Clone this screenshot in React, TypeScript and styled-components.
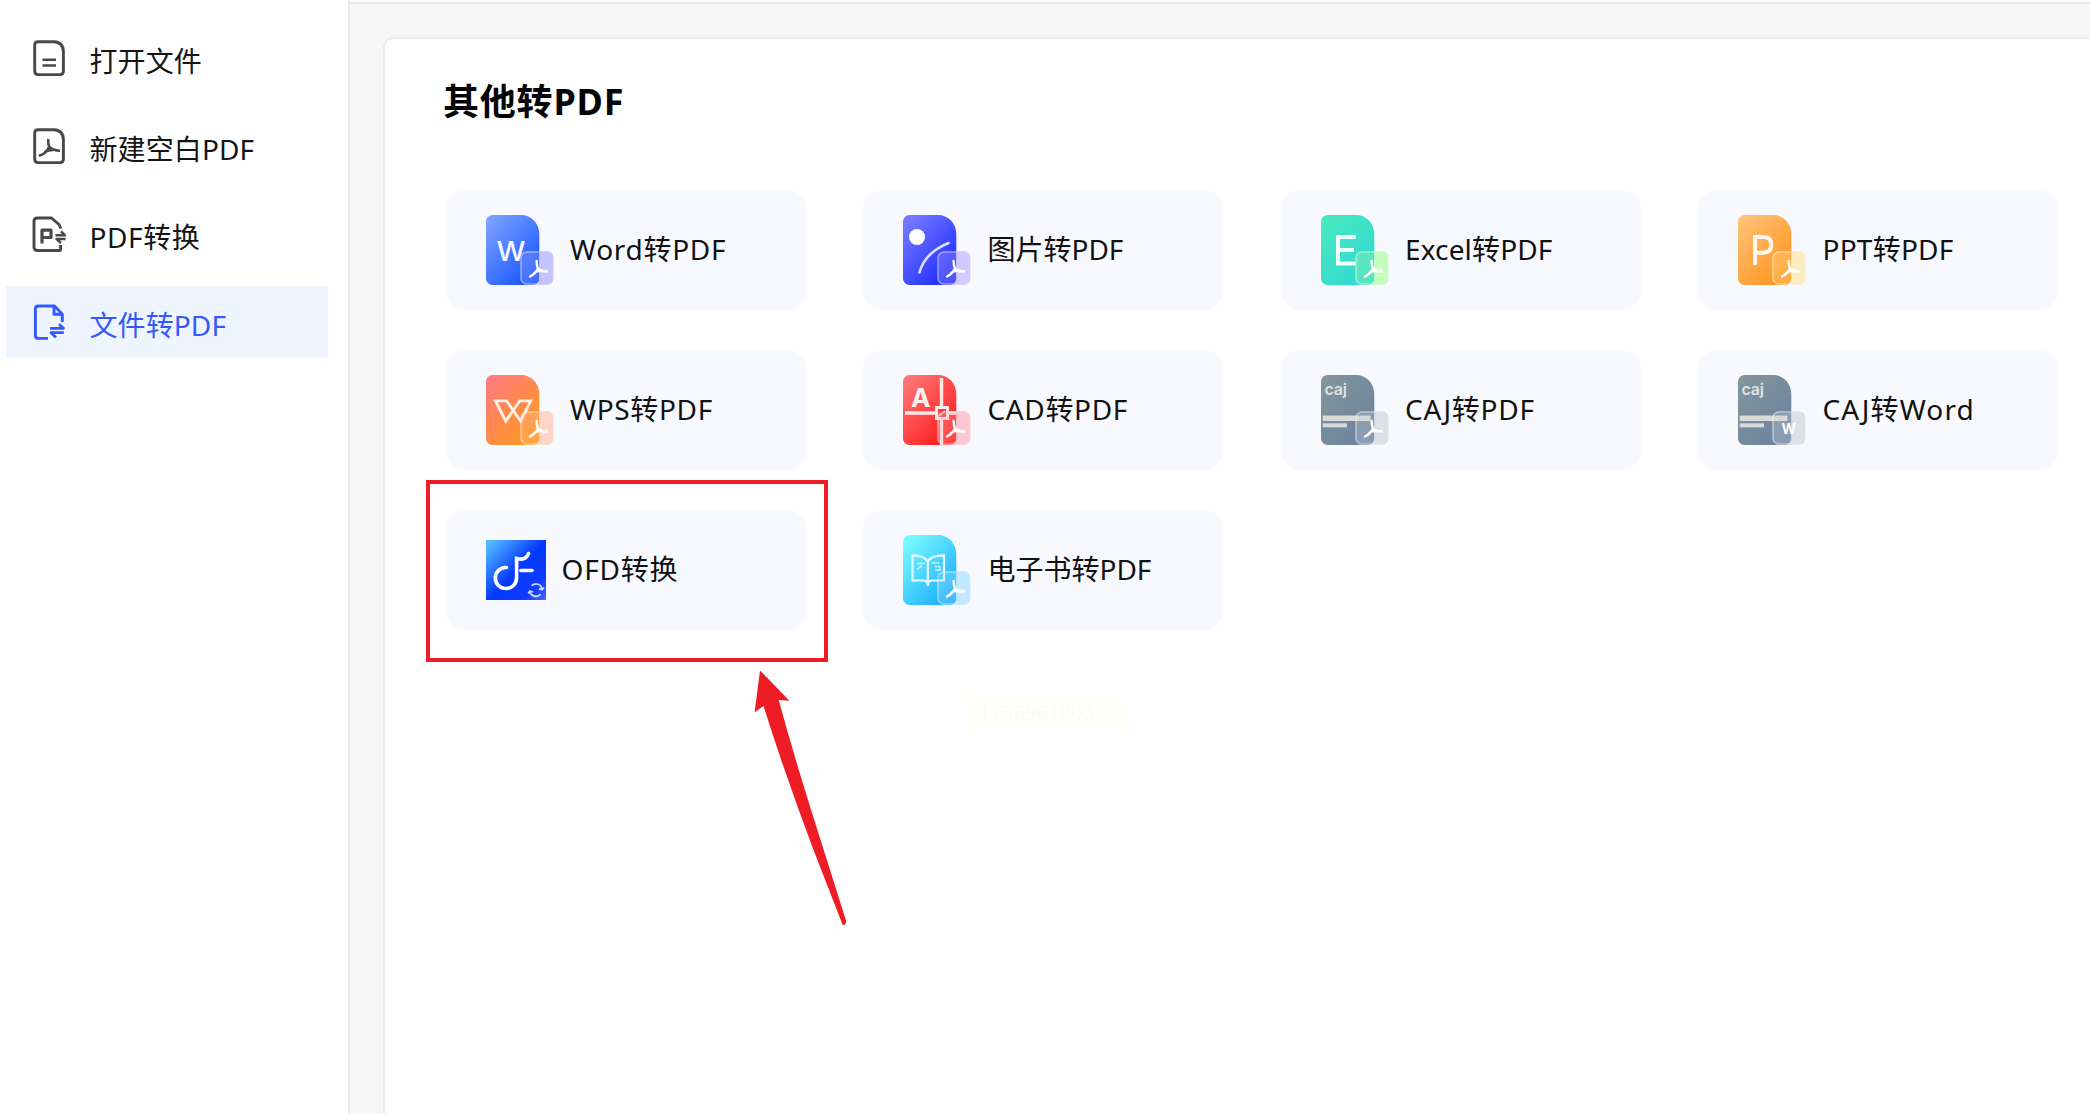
import React from "react";
import styled, { createGlobalStyle } from "styled-components";

const GlobalStyle = createGlobalStyle`
  * { box-sizing: border-box; }
  html, body { margin: 0; padding: 0; background: #fefefe; overflow: hidden; }
  body { font-family: "Noto Sans", "Noto Sans CJK SC", sans-serif; color: #111; }
  svg { display: block; flex: none; }
`;

const Page = styled.div`
  position: relative;
  display: flex;
  width: 2090px;
  height: 1114px;
  overflow: hidden;
`;

const Sidebar = styled.nav`
  width: 350px;
  flex: none;
  padding: 22px 20px 0 6px;
  border-right: 2px solid #e9e9e9;
  background: #fefefe;
  display: flex;
  flex-direction: column;
  gap: 16px;
`;

const NavItem = styled.a<{ $active?: boolean }>`
  height: 72px;
  display: flex;
  align-items: center;
  gap: 22.5px;
  padding-left: 25px;
  color: ${(p) => (p.$active ? "#3358ff" : "#141414")};
  background: ${(p) => (p.$active ? "#eef5ff" : "transparent")};
`;

const NavIcon = styled.svg<{ $active?: boolean }>`
  width: 36px;
  height: 40px;
  fill: none;
  stroke: ${(p) => (p.$active ? "#3358ff" : "#484848")};
  stroke-width: 2.9;
  stroke-linejoin: round;
`;

const NavLabel = styled.span<{ $spacing?: number }>`
  font-size: 28px;
  line-height: 40px;
  padding-top: 6px;
  letter-spacing: ${(p) => p.$spacing ?? 0.1}px;
  white-space: nowrap;
`;

const Main = styled.main`
  flex: 1;
  margin-top: 2px;
  padding: 33px 0 0 33px;
  border-top: 2px solid #e8e8e8;
  background: #f7f7f7;
  display: flex;
`;

const Panel = styled.section`
  flex: 1;
  padding: 39px 0 0 61px;
  background: #fefefe;
  border: 2px solid #ebebeb;
  border-right: 0;
  border-bottom: 0;
  border-top-left-radius: 10px;
`;

const Title = styled.h1`
  margin: 0 0 64px -3px;
  font-size: 36px;
  line-height: 48px;
  font-weight: 700;
  letter-spacing: 0.8px;
  color: #050505;
`;

const Grid = styled.div`
  display: grid;
  grid-template-columns: repeat(4, 359.6px);
  grid-auto-rows: 120px;
  column-gap: 57.9px;
  row-gap: 40px;
`;

const Card = styled.div<{ $gap: number }>`
  display: flex;
  align-items: center;
  gap: ${(p) => p.$gap}px;
  padding: 0 0 1px 40px;
  border-radius: 20px;
  background: #f8f9ff;
`;

const CardLabel = styled.span<{ $spacing: number }>`
  font-size: 28px;
  line-height: 40px;
  padding-bottom: 2px;
  letter-spacing: ${(p) => p.$spacing}px;
  white-space: nowrap;
`;

const Highlight = styled.div`
  position: absolute;
  left: 426px;
  top: 480px;
  width: 402px;
  height: 182px;
  border: 4px solid #ee1c25;
`;

const Arrow = styled.svg`
  position: absolute;
  left: 750px;
  top: 665px;
  width: 100px;
  height: 264px;
  fill: #ee1c25;
`;

const Stamp = styled.div`
  position: absolute;
  left: 967px;
  top: 694px;
  width: 158px;
  height: 38px;
  padding-left: 12px;
  background: #fffff9;
  color: #fbfbf6;
  font: 23px/38px "Liberation Serif", serif;
`;

const OpenIcon = () => (
  <NavIcon viewBox="0 0 36 40">
    <path d="M7 3.8H23Q32.4 4.5 32.4 14V33Q32.4 36.6 29 36.6H7Q3.7 36.6 3.7 33V7Q3.7 3.8 7 3.8Z" />
    <path d="M11.5 21.8H25M11.5 27.5H25" strokeWidth={2.6} />
  </NavIcon>
);

const BlankIcon = () => (
  <NavIcon viewBox="0 0 36 40">
    <path d="M7 3.8H23Q32.4 4.5 32.4 14V33Q32.4 36.6 29 36.6H7Q3.7 36.6 3.7 33V7Q3.7 3.8 7 3.8Z" />
    <path d="M17.3 13Q16.8 18 18.3 21Q21.5 24.3 29 24.7M18.3 20.5Q15 28 7.8 29.8M13.5 26Q18 23.8 22.5 24" strokeWidth={2.6} />
  </NavIcon>
);

const ConvertIcon = () => (
  <NavIcon viewBox="0 0 36 40">
    <path d="M29.8 14.5L28 10.5L20.5 4H6.5Q3 4 3 7.5V33Q3 36.5 6.5 36.5H28.5Q29.6 36.5 29.6 35V31" />
    <path d="M11 29.5V16.2H20V23.5H11" strokeWidth={3.2} />
    <path d="M24.5 21.3H34L30 17.3M34.5 25H25.5L30 29" strokeWidth={2.4} />
  </NavIcon>
);

const FileIcon = () => (
  <NavIcon viewBox="0 0 36 40" $active>
    <path d="M17 36.4H7Q4.4 36.4 4.4 33.5V7Q4.4 4 7 4H23.5L31.3 12.3V20" />
    <path d="M23 4.5V12.3H31" />
    <path d="M19 26.3H32.5L28 22.3M32.8 30.7H20L25 35.5" strokeWidth={2.8} />
  </NavIcon>
);

const nav = [
  { label: "打开文件", Icon: OpenIcon },
  { label: "新建空白PDF", Icon: BlankIcon },
  { label: "PDF转换", Icon: ConvertIcon, spacing: 0.6 },
  { label: "文件转PDF", Icon: FileIcon, active: true },
];

interface DocProps {
  id: string;
  from: string;
  to: string;
  badge: string;
  word?: boolean;
  children: React.ReactNode;
}

const DOC = "M6.5 0H35.3A18 19 0 0 1 53.3 19V63.5A6.5 6.5 0 0 1 46.8 70H6.5A6.5 6.5 0 0 1 0 63.5V6.5A6.5 6.5 0 0 1 6.5 0Z";

/* Document tile with a translucent target-format badge in its lower right corner. */
const Doc = ({ id, from, to, badge, word, children }: DocProps) => (
  <svg width="68" height="70" viewBox="0 0 68 70" fill="none">
    <defs>
      <linearGradient id={id} x1="0.05" y1="0.1" x2="0.8" y2="1">
        <stop offset="0" stopColor={from} />
        <stop offset="1" stopColor={to} />
      </linearGradient>
      <clipPath id={id + "c"}>
        <path d={DOC} />
      </clipPath>
    </defs>
    <path d={DOC} fill={`url(#${id})`} />
    {children}
    <rect x="34.3" y="36.3" width="33" height="33.5" rx="6.5" fill={badge} fillOpacity="0.3" />
    <path d="M53.3 36.3H60.8Q67.3 36.3 67.3 43V63.3Q67.3 69.8 60.8 69.8H50Q53.3 68 53.3 63Z" fill={badge} fillOpacity="0.5" />
    <rect x="35" y="37" width="31.6" height="32" rx="6" stroke="#fff" strokeOpacity="0.4" strokeWidth="1.5" clipPath={`url(#${id}c)`} />
    {word ? (
      <text x="43.6" y="59.2" fontSize="14" fontWeight="700" fill="#fff" fontFamily="Inter, sans-serif">W</text>
    ) : (
      <path d="M50.6 46Q50.8 51.5 52.3 53.7Q55 56.5 61 56.5M52.2 53Q49.5 59 44 61.5M48.5 57.5Q52 55.5 56 56.2" stroke="#fff" strokeWidth="2.4" strokeLinecap="round" />
    )}
  </svg>
);

const Caj = () => (
  <>
    <text x="3.6" y="20" fontSize="16" fontWeight="600" fill="#dde2e5" fontFamily="Inter, sans-serif" textLength="22.4">caj</text>
    <path d="M1.7 43.2H49.5" stroke="#dadada" strokeWidth="5.6" />
    <path d="M1.7 50.3H26" stroke="#dadada" strokeWidth="4" />
  </>
);

const Ofd = () => (
  <svg width="60" height="60" viewBox="0 0 60 60" fill="none" stroke="#fff">
    <defs>
      <linearGradient id="ofd" x1="0" y1="0.05" x2="1" y2="1">
        <stop offset="0.05" stopColor="#51b7ff" />
        <stop offset="0.5" stopColor="#0538ff" />
        <stop offset="0.8" stopColor="#0f3cff" />
        <stop offset="1" stopColor="#4865ff" />
      </linearGradient>
    </defs>
    <rect width="60" height="60" fill="url(#ofd)" stroke="none" />
    <path d="M20.5 27.5C13 27 9.3 33 9.3 38C9.3 44 14 48.5 19.7 48.5C26 48.5 30.6 44 30.6 37.5V18.5Q40 21 42.5 13.5" strokeWidth="3.6" strokeLinecap="round" />
    <path d="M35 30.5H46" strokeWidth="3.6" strokeLinecap="round" />
    <path d="M45.5 45.6Q50 42.2 54.2 45.4Q55.8 46.8 56 49.2M58 47.5L56 49.8L53 48.6M54.6 54.4Q50 58.4 45.6 54.8Q44.2 53.4 44 51.5M42.2 53.4L44 51L47 52" strokeWidth="1.8" opacity="0.8" />
  </svg>
);

const cards: { label: string; gap?: number; spacing?: number; icon: React.ReactNode }[] = [
  {
    label: "Word转PDF",
    spacing: 0.7,
    icon: (
      <Doc id="word" from="#7ba0ff" to="#1555ff" badge="#a9a8ff">
        <text x="10.5" y="45.6" fontSize="26.5" fontWeight="500" fill="#f4f7ff" fontFamily="Inter, sans-serif" textLength="29" lengthAdjust="spacingAndGlyphs">W</text>
      </Doc>
    ),
  },
  {
    label: "图片转PDF",
    icon: (
      <Doc id="pic" from="#7579ff" to="#1c2cff" badge="#c0adff">
        <circle cx="14" cy="22" r="8" fill="#fff" />
        <path d="M16.5 57.5Q21.5 38 45.5 28" stroke="#d9dcff" strokeWidth="2.6" strokeLinecap="round" />
      </Doc>
    ),
  },
  {
    label: "Excel转PDF",
    spacing: 0.15,
    icon: (
      <Doc id="excel" from="#49e8bf" to="#30d9d3" badge="#a8ff9c">
        <path d="M34.7 22H17V48.5H34.7M17 35H33" stroke="#effffb" strokeWidth="4" />
      </Doc>
    ),
  },
  {
    label: "PPT转PDF",
    spacing: 0.25,
    icon: (
      <Doc id="ppt" from="#ffc077" to="#ff941c" badge="#ffe4a0">
        <path d="M17 50V22H25.5Q33.3 22 33.3 29.8T25.5 37.7H17" stroke="#fff7ed" strokeWidth="4" />
      </Doc>
    ),
  },
  {
    label: "WPS转PDF",
    spacing: 0.65,
    icon: (
      <Doc id="wps" from="#ff7b7c" to="#ff991c" badge="#ffc3a5">
        <path d="M9.5 25.8H20.5L34.7 46.2L44.7 25.8H33.8L19.8 46.2Z" stroke="#fff0e8" strokeWidth="2.8" />
      </Doc>
    ),
  },
  {
    label: "CAD转PDF",
    spacing: 0.65,
    icon: (
      <Doc id="cad" from="#ff7474" to="#ff1b1b" badge="#ffaeb8">
        <text x="8" y="32" fontSize="26" fontWeight="700" fill="#fff0f0" fontFamily="Inter, sans-serif">A</text>
        <path d="M38.5 3V31.5M38.5 45V70M2 38H32M45.5 38H53" stroke="#ffe9e9" strokeWidth="3.4" />
        <rect x="33.5" y="32.5" width="11" height="11" stroke="#ffe9e9" strokeWidth="3" />
        <path d="M36.5 41L42 36" stroke="#ffd0d0" strokeWidth="1.2" />
      </Doc>
    ),
  },
  {
    label: "CAJ转PDF",
    spacing: 0.75,
    icon: (
      <Doc id="caj1" from="#81959a" to="#6b83a0" badge="#ccd3dc">
        <Caj />
      </Doc>
    ),
  },
  {
    label: "CAJ转Word",
    spacing: 1.15,
    icon: (
      <Doc id="caj2" from="#81959a" to="#6b83a0" badge="#ccd3dc" word>
        <Caj />
      </Doc>
    ),
  },
  { label: "OFD转换", gap: 15.5, spacing: 0.8, icon: <Ofd /> },
  {
    label: "电子书转PDF",
    icon: (
      <Doc id="book" from="#7bfaff" to="#18acff" badge="#a5e0ff">
        <path d="M24.8 51V27Q22.5 20.5 9.5 20.3V45.5H21Q24.8 46 24.8 51Q24.8 46 28.5 45.5H41V20.3Q27 20.5 24.8 27" stroke="#e6fbff" strokeWidth="2.2" />
        <path d="M14 28.5H22M14 34.5L19 30.5M28.5 28H36.5M31.5 31.5H37M32.5 35.2H37V31" stroke="#c5f3ff" strokeWidth="1.7" />
      </Doc>
    ),
  },
];

export default function App() {
  return (
    <Page>
      <GlobalStyle />
      <Sidebar>
        {nav.map(({ label, Icon, active, spacing }) => (
          <NavItem key={label} $active={active}>
            <Icon />
            <NavLabel $spacing={spacing}>{label}</NavLabel>
          </NavItem>
        ))}
      </Sidebar>
      <Main>
        <Panel>
          <Title>其他转PDF</Title>
          <Grid>
            {cards.map((c) => (
              <Card key={c.label} $gap={c.gap ?? 16}>
                {c.icon}
                <CardLabel $spacing={c.spacing ?? 0}>{c.label}</CardLabel>
              </Card>
            ))}
          </Grid>
        </Panel>
      </Main>
      <Highlight />
      <Arrow viewBox="750 665 100 264">
        <path d="M760 670.5L789.5 700.8L778.7 700Q794 756 813 816L846.3 921.5Q845.5 926 842.5 924.5L812 846Q785 774 763.5 706L754.6 712.3Z" />
      </Arrow>
      <Stamp>1756961005</Stamp>
    </Page>
  );
}
